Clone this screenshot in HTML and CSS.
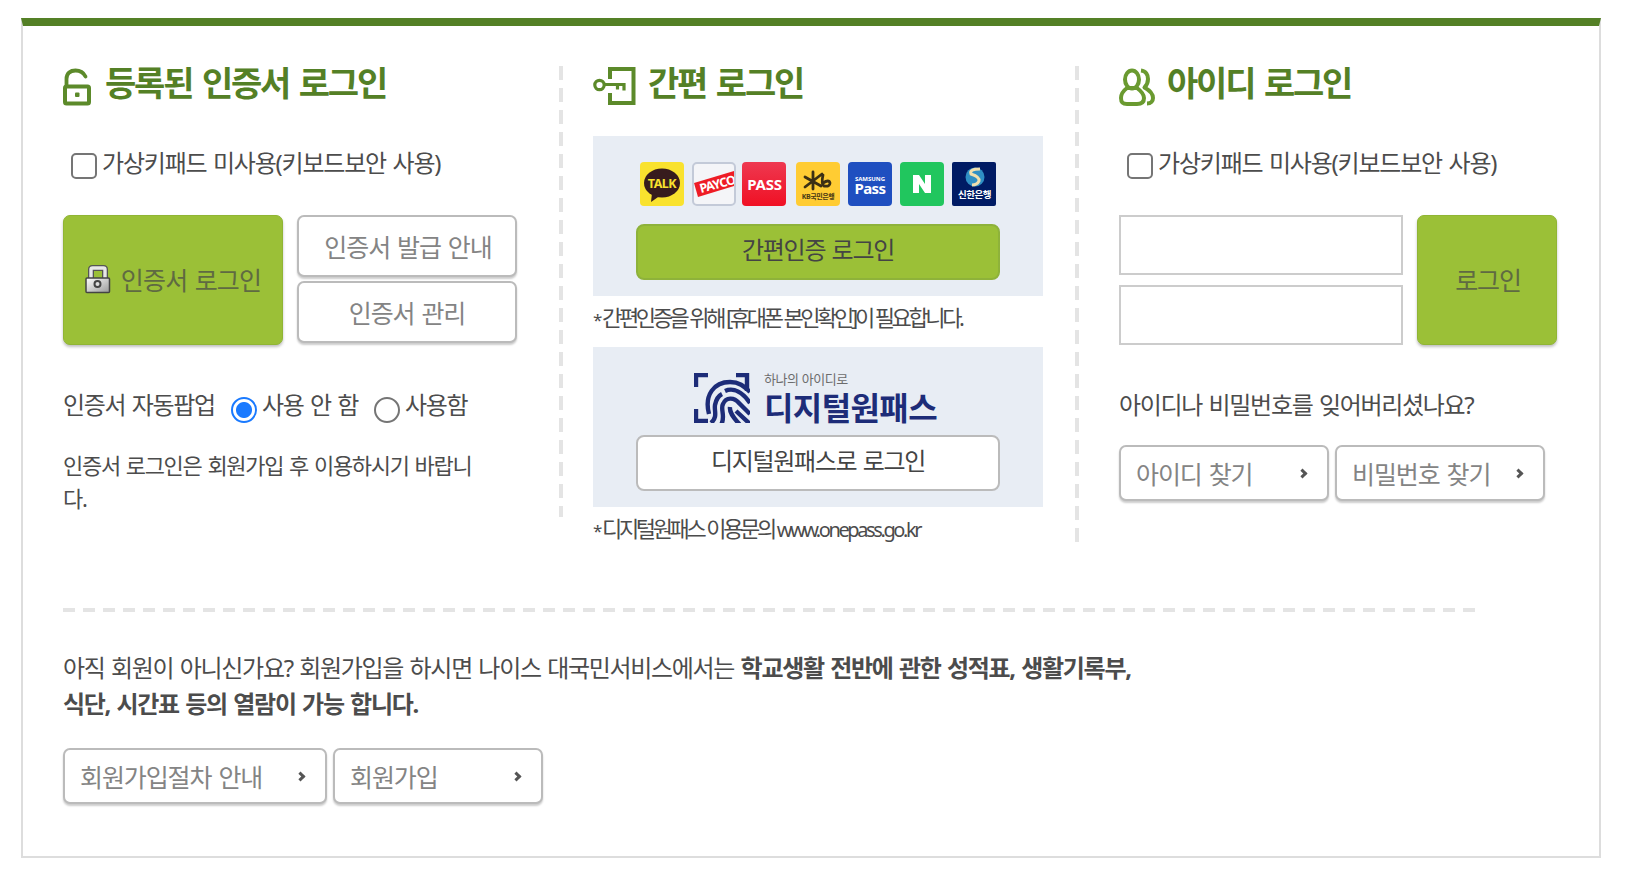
FILE: index.html
```html
<!DOCTYPE html>
<html lang="ko">
<head>
    <meta charset="UTF-8">
    <meta name="viewport" content="width=device-width, initial-scale=1.0">
    <title>로그인</title>
    <link rel="stylesheet" href="styles.css">
</head>
<body>

<div class="login-box">
    <div class="login-cols">

        <!-- 인증서 로그인 -->
        <section class="col col-cert">
            <h2>
                <svg class="h-icon" width="28" height="38" viewBox="0 0 28 38">
                    <path d="M3.5 18V11C3.5 5 7.5 2.5 12.5 2.5C18 2.5 20.5 4.5 22.5 8.5" fill="none" stroke="#5c8a2a" stroke-width="3.8" stroke-linecap="round"/>
                    <rect x="2" y="18.5" width="24" height="17" rx="1.5" fill="none" stroke="#5c8a2a" stroke-width="4"/>
                    <rect x="12" y="24.5" width="4.5" height="4.5" rx="1" fill="#5c8a2a"/>
                </svg>
                <span>등록된 인증서 로그인</span>
            </h2>
            <label class="check"><input type="checkbox"><span>가상키패드 미사용(키보드보안 사용)</span></label>
            <div class="cert-btns">
                <button class="btn-img btn-green btn-cert">
                    <svg width="26" height="29" viewBox="0 0 26 29">
                        <defs>
                            <linearGradient id="lockBody" x1="0" y1="0" x2="1" y2="1">
                                <stop offset="0" stop-color="#fff"/>
                                <stop offset="1" stop-color="#999"/>
                            </linearGradient>
                        </defs>
                        <path d="M6 15V4.5Q6 3 7.5 3H18.5Q20 3 20 4.5V15" fill="none" stroke="#555" stroke-width="6"/>
                        <path d="M6 15V4.5Q6 3 7.5 3H18.5Q20 3 20 4.5V15" fill="none" stroke="#e8e8e8" stroke-width="3.4"/>
                        <rect x="1" y="13" width="23.5" height="14.5" rx="1" fill="url(#lockBody)" stroke="#444" stroke-width="1.5"/>
                        <circle cx="12.5" cy="19" r="3" fill="#ddd" stroke="#444" stroke-width="2"/>
                    </svg>
                    <span>인증서 로그인</span>
                </button>
                <div class="cert-side">
                    <button class="btn-img btn-white btn-issue">인증서 발급 안내</button>
                    <button class="btn-img btn-white">인증서 관리</button>
                </div>
            </div>
            <div class="auto-popup">
                <span>인증서 자동팝업</span>
                <label><input type="radio" name="popup" checked><span>사용 안 함</span></label>
                <label><input type="radio" name="popup"><span>사용함</span></label>
            </div>
            <p class="cert-info">인증서 로그인은 회원가입 후 이용하시기 바랍니다.</p>
        </section>

        <!-- 간편 로그인 -->
        <section class="col col-easy">
            <h2>
                <svg class="h-icon" width="43" height="39" viewBox="0 0 43 39">
                    <path d="M17 12V2H40.5V36H17V26" fill="none" stroke="#5c8a2a" stroke-width="4"/>
                    <circle cx="6.5" cy="18" r="4.7" fill="none" stroke="#5c8a2a" stroke-width="3.2"/>
                    <path d="M11 17.5H31V23.5M24.5 17.5V22.5" fill="none" stroke="#5c8a2a" stroke-width="3.2"/>
                </svg>
                <span>간편 로그인</span>
            </h2>
            <div class="easy-box">
                <div class="providers">
                    <svg width="44" height="44" viewBox="0 0 44 44">
                        <rect width="44" height="44" rx="4" fill="#f9e22e"/>
                        <ellipse cx="22" cy="21" rx="18" ry="14.5" fill="#371c1d"/>
                        <path d="M12 31L11 40L21 33Z" fill="#371c1d"/>
                        <text x="22" y="26" class="logo-talk">TALK</text>
                    </svg>
                    <svg width="44" height="44" viewBox="0 0 44 44">
                        <defs>
                            <clipPath id="paycoClip"><rect x="2" y="2" width="40" height="40"/></clipPath>
                        </defs>
                        <rect x="1" y="1" width="42" height="42" rx="4" fill="#f4f5f8" stroke="#c3cad8" stroke-width="2"/>
                        <g clip-path="url(#paycoClip)">
                            <path d="M2 21L42 9V24L6 35Z" fill="#ee1c25"/>
                            <text x="9" y="31" class="logo-payco" transform="rotate(-15 9 31)">PAYCO</text>
                        </g>
                    </svg>
                    <svg width="44" height="44" viewBox="0 0 44 44">
                        <defs>
                            <linearGradient id="passBg" x1="0" y1="0" x2="0" y2="1">
                                <stop offset="0" stop-color="#ee3850"/>
                                <stop offset="1" stop-color="#f01024"/>
                            </linearGradient>
                        </defs>
                        <rect width="44" height="44" rx="4" fill="url(#passBg)"/>
                        <text x="22.5" y="28" class="logo-pass">PASS</text>
                    </svg>
                    <svg class="kb" width="44" height="44" viewBox="0 0 44 44">
                        <rect width="44" height="44" rx="4" fill="#ffcc33"/>
                        <path d="M17 10V27M9 15L25 24M26 12L9 25M27 13Q25 22 28 24Q34 25 34 21Q33 17 27 21" fill="none" stroke="#3c3014" stroke-width="2.8" stroke-linecap="round"/>
                        <text x="22" y="37" class="logo-kb">KB국민은행</text>
                    </svg>
                    <svg width="44" height="44" viewBox="0 0 44 44">
                        <rect width="44" height="44" rx="4" fill="#1f4fc0"/>
                        <text class="logo-spass"><tspan x="22" y="18.5" class="logo-samsung">SAMSUNG</tspan><tspan x="22" y="32">Pass</tspan></text>
                    </svg>
                    <svg width="44" height="44" viewBox="0 0 44 44">
                        <rect width="44" height="44" rx="4" fill="#21c65e"/>
                        <path d="M13 13H19L25 22V13H31V31H25L19 22V31H13Z" fill="#fff"/>
                    </svg>
                    <svg width="44" height="44" viewBox="0 0 44 44">
                        <rect width="44" height="44" rx="2" fill="#001b64"/>
                        <circle cx="23" cy="15" r="9.5" fill="#2f8fc4"/>
                        <path d="M28 7Q17 7 19 12Q28 15 27 19Q25 23 20 23" fill="none" stroke="#f0dfae" stroke-width="3"/>
                        <text x="22.5" y="36" class="logo-shinhan">신한은행</text>
                    </svg>
                </div>
                <button class="btn-easy btn-easy-green">간편인증 로그인</button>
            </div>
            <p class="note"><span class="star">*</span>간편인증을 위해 [휴대폰 본인확인]이 필요합니다.</p>
            <div class="easy-box">
                <div class="onepass">
                    <svg width="56" height="50" viewBox="0 0 56 50">
                        <g fill="none" stroke="#1d2c78" stroke-width="4.4">
                            <path d="M2 14V2H14M42 2H53V18M2 36V48H14"/>
                            <path d="M15 41C10 22 20 9 36 9C45 9 50 13 56 19"/>
                            <path d="M17 50C24 44 20 38 21 32C22 27 24 23 28 21"/>
                            <path d="M31 18C40 14 49 20 56 30"/>
                            <path d="M27 52C32 44 26 36 29 31C32 24 40 24 45 30L56 41"/>
                            <path d="M36 34C35 41 42 47 46 52M42 38L56 51"/>
                        </g>
                    </svg>
                    <div class="onepass-text">
                        <span class="onepass-sub">하나의 아이디로</span>
                        <strong>디지털원패스</strong>
                    </div>
                </div>
                <button class="btn-easy">디지털원패스로 로그인</button>
            </div>
            <p class="note"><span class="star">*</span>디지털원패스 이용문의 <span class="url">www.onepass.go.kr</span></p>
        </section>

        <!-- 아이디 로그인 -->
        <section class="col col-id">
            <h2>
                <svg class="h-icon" width="36" height="38" viewBox="0 0 36 38">
                    <g fill="none" stroke="#6a9a30" stroke-width="4" stroke-linejoin="round">
                        <ellipse cx="13" cy="11.5" rx="7" ry="9"/>
                        <path d="M8 20C4 23 2 26 2 30C2 35 4 36 8 36H18C23 36 25 34 25 30C25 26 22 23 18 20Z"/>
                        <path d="M22 2.5C27 3 29 7 29 11C29 15 28 17 25.5 19.5C30 22 34 26 34 30C34 33 32 35.5 28 35.5"/>
                    </g>
                </svg>
                <span>아이디 로그인</span>
            </h2>
            <label class="check"><input type="checkbox"><span>가상키패드 미사용(키보드보안 사용)</span></label>
            <form class="id-form">
                <div class="id-fields">
                    <input type="text" aria-label="아이디">
                    <input type="password" aria-label="비밀번호">
                </div>
                <button type="button" class="btn-img btn-green btn-id">로그인</button>
            </form>
            <p class="forgot">아이디나 비밀번호를 잊어버리셨나요?</p>
            <div class="links">
                <a class="btn-img btn-white btn-link">아이디 찾기<i class="arrow"></i></a>
                <a class="btn-img btn-white btn-link">비밀번호 찾기<i class="arrow"></i></a>
            </div>
        </section>
    </div>

    <div class="join">
        <p>아직 회원이 아니신가요? 회원가입을 하시면 나이스 대국민서비스에서는 <strong>학교생활 전반에 관한 성적표, 생활기록부,<br>식단, 시간표 등의 열람이 가능 합니다.</strong></p>
        <div class="links">
            <a class="btn-img btn-white btn-link btn-wide">회원가입절차 안내<i class="arrow"></i></a>
            <a class="btn-img btn-white btn-link">회원가입<i class="arrow"></i></a>
        </div>
    </div>
</div>

</body>
</html>
```
FILE: styles.css
```css
* {
    box-sizing: border-box;
}
body {
    margin: 0;
    padding: 18px 25px 20px 21px;
    font-family: "Noto Sans", "Noto Sans CJK KR", sans-serif;
    font-size: 24px;
    letter-spacing: -1.3px;
    word-spacing: 1.5px;
    color: #4c4c4c;
    background: #fff;
}
h2, p {
    margin: 0;
}
button {
    padding: 0;
    font-family: inherit;
    cursor: pointer;
}
.login-box {
    height: 840px;
    padding: 40px 40px 0;
    border: 2px solid #ddd;
    border-top: 8px solid #548026;
}
.login-cols {
    display: flex;
    align-items: flex-start;
    height: 542px;
}

/* columns, split by dashed lines */
.col {
    padding-right: 40px;
    background: repeating-linear-gradient(#e4e4e4 0 14px, transparent 14px 22px) right top / 4px 100% no-repeat;
}
.col-cert {
    width: 500px;
    height: 451px;
}
.col-easy {
    width: 486px;
    height: 476px;
    margin-left: 30px;
    padding-right: 36px;
}
.col-id {
    margin-left: 40px;
    padding-right: 0;
    background: none;
}
h2 {
    display: flex;
    height: 70px;
    font-size: 34px;
    line-height: 34px;
    letter-spacing: -2.2px;
    word-spacing: 3px;
    color: #548026;
    white-space: nowrap;
}
.h-icon {
    flex: none;
    margin-top: 2px;
    margin-right: 14px;
}
.col-easy .h-icon {
    margin-top: 1px;
    margin-right: 12px;
}
.col-id .h-icon {
    margin-right: 12px;
}

/* checkbox / radio */
.check {
    display: flex;
    height: 79px;
    padding: 10px 0 0 8px;
    line-height: 33px;
    letter-spacing: -1.2px;
    white-space: nowrap;
}
input[type="checkbox"],
input[type="radio"] {
    appearance: none;
    flex: none;
    width: 26px;
    height: 26px;
    margin: 7px 5px 0 0;
    border: 2px solid #757575;
    border-radius: 5px;
    background: #fff;
}
input[type="radio"] {
    border-radius: 50%;
}
input[type="radio"]:checked {
    border-color: #1a7aff;
    background: radial-gradient(circle, #1a7aff 7.5px, #fff 8.5px);
}

/* buttons */
.btn-img {
    display: flex;
    align-items: center;
    justify-content: center;
    padding-bottom: 2px;
    border: 2px solid #bbb;
    border-radius: 7px;
    font-size: 25px;
    font-weight: 400;
    letter-spacing: -1.1px;
    word-spacing: 1.6px;
    color: #848484;
    white-space: nowrap;
}
.btn-white {
    height: 56px;
    background: #fff;
    box-shadow: 0 2px 2px rgba(0, 0, 0, 0.2);
}
.btn-green {
    height: 130px;
    border: 1px solid #90b534;
    background: #9bc037;
    color: #5f6a42;
    box-shadow: 0 2px 3px rgba(0, 0, 0, 0.25);
}
.cert-btns {
    display: flex;
    gap: 14px;
    height: 173px;
}
.btn-cert {
    width: 220px;
    gap: 10px;
}
.btn-cert span {
    letter-spacing: -0.8px;
}
.cert-side {
    display: flex;
    flex-direction: column;
    gap: 4px;
}
.cert-side .btn-white {
    width: 220px;
    height: 62px;
    padding-bottom: 0;
}
.cert-side .btn-issue {
    padding-left: 2px;
}
.auto-popup {
    display: flex;
    height: 61px;
    line-height: 34px;
    white-space: nowrap;
}
.auto-popup label {
    display: flex;
    margin-left: 16px;
}
.auto-popup input[type="radio"] {
    margin-top: 9px;
}
.cert-info {
    width: 424px;
    font-size: 22px;
    line-height: 33px;
    word-break: break-all;
}

/* easy login */
.easy-box {
    display: flex;
    flex-direction: column;
    align-items: center;
    width: 450px;
    height: 160px;
    padding-top: 26px;
    background: #e8edf4;
}
.providers {
    display: flex;
    gap: 8px;
    height: 62px;
}
.providers svg:nth-child(3) {
    margin-left: -2px;
}
.providers .kb {
    margin-left: 2px;
}
.providers text {
    font-weight: 700;
    letter-spacing: 0;
    fill: #fff;
    text-anchor: middle;
}
.providers .logo-talk {
    font-size: 12.5px;
    letter-spacing: -0.5px;
    fill: #f9e22e;
}
.providers .logo-payco {
    font-size: 12.5px;
    text-anchor: start;
    letter-spacing: -0.8px;
}
.providers .logo-pass {
    font-size: 15px;
    letter-spacing: -0.3px;
}
.providers .logo-kb {
    font-size: 7px;
    letter-spacing: -0.4px;
    fill: #4a3a14;
}
.providers .logo-spass {
    font-size: 15px;
    letter-spacing: -0.6px;
}
.providers .logo-samsung {
    font-size: 6px;
    letter-spacing: 0;
}
.providers .logo-shinhan {
    font-size: 9.5px;
    letter-spacing: -0.5px;
}
.btn-easy {
    width: 364px;
    height: 56px;
    padding-bottom: 7px;
    border: 2px solid #bbb;
    border-radius: 8px;
    background: #fff;
    font-size: 24px;
    letter-spacing: -1.3px;
    word-spacing: 1.5px;
    color: #444;
}
.btn-easy-green {
    border-color: #8eb23a;
    background: #9bc037;
}
.note {
    height: 51px;
    font-size: 22px;
    line-height: 43px;
    letter-spacing: -3.35px;
    word-spacing: 0.5px;
    white-space: nowrap;
}
.star {
    margin-right: 3px;
    font-size: 17px;
}
.url {
    font-size: 20px;
    letter-spacing: -2.4px;
}
.onepass {
    display: flex;
    gap: 14px;
    height: 62px;
    margin-right: 6px;
    color: #1d2c78;
}
.onepass-text {
    width: 172px;
    white-space: nowrap;
}
.onepass-sub {
    display: block;
    height: 17px;
    font-size: 13px;
    line-height: 12px;
    letter-spacing: -0.4px;
    word-spacing: 0;
    color: #6c6c6c;
}
.onepass-text strong {
    display: block;
    font-size: 32px;
    font-weight: 700;
    line-height: 36px;
    letter-spacing: -0.6px;
}

/* id login */
.id-form {
    display: flex;
    gap: 14px;
    height: 173px;
}
.id-fields {
    display: flex;
    flex-direction: column;
    gap: 10px;
}
.id-fields input {
    width: 284px;
    height: 60px;
    padding: 0 10px;
    border: 2px solid #ccc;
    font-size: 24px;
}
.btn-id {
    width: 140px;
    padding-left: 2px;
}
.forgot {
    height: 57px;
    line-height: 34px;
}
.links {
    display: flex;
    gap: 6px;
}
.btn-link {
    justify-content: space-between;
    width: 210px;
    padding: 0 21px 1px 15px;
}
.btn-wide {
    width: 264px;
}
.arrow {
    width: 7px;
    height: 7px;
    margin-top: 2px;
    border: solid #555;
    border-width: 3px 3px 0 0;
    transform: rotate(45deg);
}

/* join */
.join {
    padding-top: 42px;
    background: repeating-linear-gradient(90deg, #e4e4e4 0 12px, transparent 12px 20px) left top / 1420px 4px no-repeat;
}
.join p {
    height: 98px;
    line-height: 36px;
    white-space: nowrap;
}
```
